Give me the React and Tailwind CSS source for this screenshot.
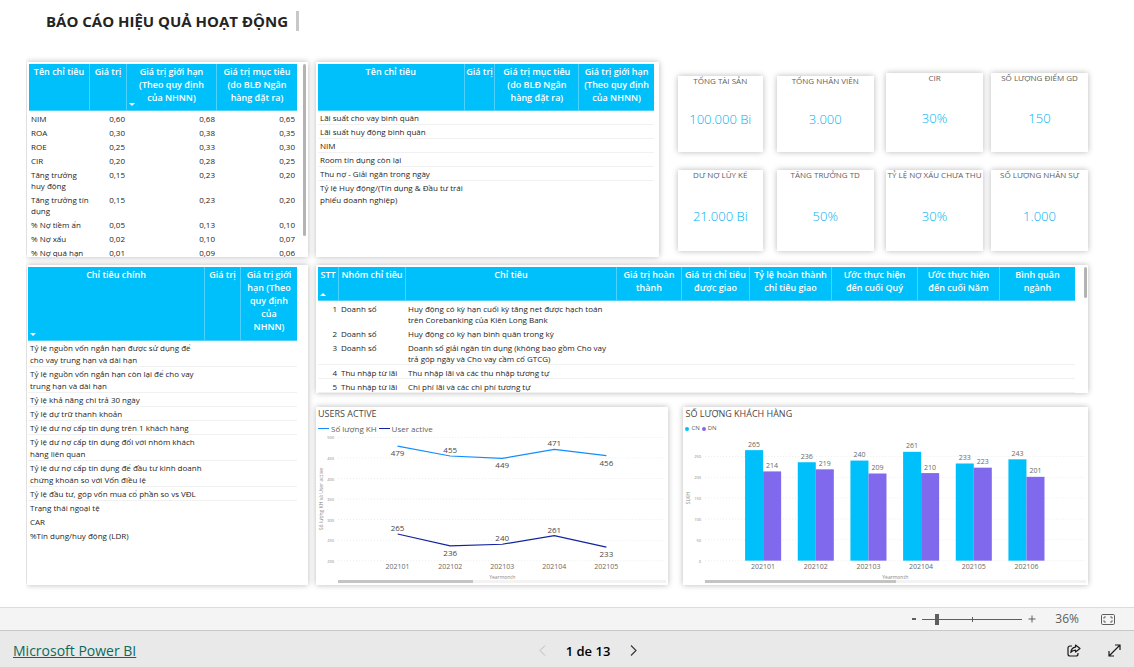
const INDICATORS = [
  ['NIM', '0,60', '0,68', '0,65'],
  ['ROA', '0,30', '0,38', '0,35'],
  ['ROE', '0,25', '0,33', '0,30'],
  ['CIR', '0,20', '0,28', '0,25'],
  ['Tăng trưởng huy động', '0,15', '0,23', '0,20'],
  ['Tăng trưởng tín dụng', '0,15', '0,23', '0,20'],
  ['% Nợ tiềm ẩn', '0,05', '0,13', '0,10'],
  ['% Nợ xấu', '0,02', '0,10', '0,07'],
  ['% Nợ quá hạn', '0,01', '0,09', '0,06'],
];

const RATES = [
  'Lãi suất cho vay bình quân',
  'Lãi suất huy động bình quân',
  'NIM',
  'Room tín dụng còn lại',
  'Thu nợ - Giải ngân trong ngày',
  'Tỷ lệ Huy động/(Tín dụng & Đầu tư trái phiếu doanh nghiệp)',
];

const MAIN_TARGETS = [
  'Tỷ lệ nguồn vốn ngắn hạn được sử dụng để cho vay trung hạn và dài hạn',
  'Tỷ lệ nguồn vốn ngắn hạn còn lại để cho vay trung hạn và dài hạn',
  'Tỷ lệ khả năng chi trả 30 ngày',
  'Tỷ lệ dự trữ thanh khoản',
  'Tỷ lệ dư nợ cấp tín dụng trên 1 khách hàng',
  'Tỷ lệ dư nợ cấp tín dụng đối với nhóm khách hàng liên quan',
  'Tỷ lệ dư nợ cấp tín dụng để đầu tư kinh doanh chứng khoán so với Vốn điều lệ',
  'Tỷ lệ đầu tư, góp vốn mua cổ phần so vs VĐL',
  'Trạng thái ngoại tệ',
  'CAR',
  '%Tín dụng/huy động (LDR)',
];

const PLAN = [
  [1, 'Doanh số', 'Huy động có kỳ hạn cuối kỳ tăng net được hạch toán trên Corebanking của Kiên Long Bank'],
  [2, 'Doanh số', 'Huy động có kỳ hạn bình quân trong kỳ'],
  [3, 'Doanh số', 'Doanh số giải ngân tín dụng (không bao gồm Cho vay trả góp ngày và Cho vay cầm cố GTCG)'],
  [4, 'Thu nhập từ lãi', 'Thu nhập lãi và các thu nhập tương tự'],
  [5, 'Thu nhập từ lãi', 'Chi phí lãi và các chi phí tương tự'],
];

const CUSTOMERS = [
  ['202101', 265, 214],
  ['202102', 236, 219],
  ['202103', 240, 209],
  ['202104', 261, 210],
  ['202105', 233, 223],
  ['202106', 243, 201],
];

function Panel({ className = '', children }) {
  return (
    <section className={`overflow-hidden bg-white shadow-[0_0_6px_rgba(0,0,0,0.28)] ${className}`}>
      {children}
    </section>
  );
}

function Th({ children, sort, pad = 'px-0.5' }) {
  return (
    <th
      scope="col"
      className={`relative border-r border-b border-[#4dd2ff] bg-[#00c0fb] pt-px align-top text-[9px] leading-[13px] font-semibold text-white last:border-r-0 ${pad}`}
    >
      {children}
      {sort && (
        <svg viewBox="0 0 6 3" className="absolute bottom-1 left-0.5 h-[3px] w-[6px] fill-white">
          {sort === 'down' ? <path d="M0 0h6L3 3z" /> : <path d="M0 3h6L3 0z" />}
        </svg>
      )}
    </th>
  );
}

function Td({ children, line, right, tight, pad = 'pl-0.5' }) {
  return (
    <td
      className={`border-b align-top text-[8px] text-[#252423] ${tight ? 'pt-0.5 leading-[11px]' : 'pt-px leading-3'} ${line ? 'border-[#f1f1f1]' : 'border-transparent'} ${right ? 'pr-0.5 text-right' : pad}`}
    >
      {children}
    </td>
  );
}

function Cols({ widths }) {
  const total = widths.reduce((a, b) => a + b, 0);
  return (
    <colgroup>
      {widths.map((w, i) => (
        <col key={i} style={{ width: `${(w / total) * 100}%` }} />
      ))}
    </colgroup>
  );
}

const TABLE = 'w-full table-fixed border-separate border-spacing-0';

function Kpi({ title, value, className }) {
  return (
    <section className={`flex flex-col bg-white text-center shadow-[0_0_6px_rgba(0,0,0,0.28)] ${className}`}>
      <h2 className="flex justify-center text-[8px] leading-[10px] whitespace-nowrap text-[#605e5c]">{title}</h2>
      <p className="flex flex-1 items-center justify-center pt-0.5 text-[13px] font-light text-[#00b0f0]">{value}</p>
    </section>
  );
}

function LineChart() {
  const xs = [397.5, 450, 502, 554, 606];
  const y = (v) => 560.5 - (v - 200) * 0.41;
  const total = [479, 455, 449, 471, 456];
  const active = [265, 236, 240, 261, 233];
  const below = { 479: 1, 449: 1, 456: 1, 236: 1, 233: 1 };
  const path = (vals) => vals.map((v, i) => `${xs[i]},${y(v)}`).join(' ');
  return (
    <svg viewBox="316 433 352 147" className="block w-full" role="img" aria-label="Users active">
      {[500, 450, 400, 350, 300, 250, 200].map((v) => (
        <g key={v}>
          <line x1="338" x2="665" y1={y(v)} y2={y(v)} stroke="#ececec" strokeDasharray="1 2" />
          <text x="334" y={y(v) + 2} textAnchor="end" fontSize="4" fill="#8a8886">{v}</text>
        </g>
      ))}
      <polyline points={path(total)} fill="none" stroke="#118dff" strokeWidth="1.2" />
      <polyline points={path(active)} fill="none" stroke="#12239e" strokeWidth="1.2" />
      {[...total, ...active].map((v, i) => (
        <text key={i} x={xs[i % 5]} y={y(v) + (below[v] ? 10 : -3)} textAnchor="middle" fontSize="8" fill="#4a4846">{v}</text>
      ))}
      {xs.map((x, i) => (
        <text key={x} x={x} y="569" textAnchor="middle" fontSize="7" fill="#6b6967">{`20210${i + 1}`}</text>
      ))}
      <text x="502" y="579" textAnchor="middle" fontSize="5" fill="#8a8886">Yearmonth</text>
      <text transform="translate(323 499) rotate(-90)" textAnchor="middle" fontSize="5" fill="#8a8886">Số lượng KH và User active</text>
    </svg>
  );
}

function BarChart() {
  const k = 0.4165;
  return (
    <svg viewBox="683 433 404 147" className="block w-full" role="img" aria-label="Số lượng khách hàng">
      {[250, 200, 150, 100, 50, 0].map((v) => (
        <g key={v}>
          <line x1="705" x2="1084" y1={560.5 - v * k} y2={560.5 - v * k} stroke="#ececec" strokeDasharray="1 2" />
          <text x="701" y={562.5 - v * k} textAnchor="end" fontSize="4" fill="#8a8886">{v}</text>
        </g>
      ))}
      {CUSTOMERS.map(([m, a, b], i) => {
        const x = 745 + i * 52.6;
        return (
          <g key={m} textAnchor="middle" fill="#6b6967">
            <rect x={x} y={560.5 - a * k} width="18" height={a * k} fill="#00c0fb" />
            <rect x={x + 18} y={560.5 - b * k} width="18" height={b * k} fill="#8069ed" />
            <text x={x + 9} y={557 - a * k} fontSize="7">{a}</text>
            <text x={x + 27} y={557 - b * k} fontSize="7">{b}</text>
            <text x={x + 18} y="569" fontSize="7">{m}</text>
          </g>
        );
      })}
      <text x="895" y="579" textAnchor="middle" fontSize="5" fill="#8a8886">Yearmonth</text>
      <text transform="translate(690 498) rotate(-90)" textAnchor="middle" fontSize="5" fill="#8a8886">SLKH</text>
    </svg>
  );
}

function HScroll({ className }) {
  return (
    <div className="mr-0.5 ml-[22px] h-[3px] bg-[#f3f3f3]">
      <div className={`h-full bg-[#c4c4c4] ${className}`} />
    </div>
  );
}

export default function App() {
  return (
    <div className="flex min-h-screen flex-col bg-white font-['Open_Sans','Noto_Sans',sans-serif] text-[#252423]">
      <header className="flex h-[54px] items-start pt-[11px] pl-[46px]">
        <h1 className="text-[15px] leading-5 font-bold">BÁO CÁO HIỆU QUẢ HOẠT ĐỘNG</h1>
        <span className="ml-2 h-5 w-[3px] bg-[#c8c8c8]" />
      </header>

      <main className="ml-[26px] grid flex-1 grid-cols-[281fr_772fr] gap-2 overflow-hidden pt-2 pr-[46px] pb-[22px] pl-px">
        <div className="flex min-w-0 flex-col gap-2">
          <Panel className="flex h-[195px] gap-1.5 pt-0.5 pr-0.5 pl-0.5">
            <div className="min-w-0 flex-1">
              <table className={TABLE}>
                <Cols widths={[61, 37, 90, 80]} />
                <thead>
                  <tr className="h-[47px]">
                    <Th>Tên chỉ tiêu</Th>
                    <Th>Giá trị</Th>
                    <Th sort="down" pad="px-2">Giá trị giới hạn (Theo quy định của NHNN)</Th>
                    <Th>Giá trị mục tiêu (do BLĐ Ngân hàng đặt ra)</Th>
                  </tr>
                </thead>
                <tbody>
                  {INDICATORS.map((r) => (
                    <tr key={r[0]}>
                      <Td tight>{r[0]}</Td>
                      <Td tight right>{r[1]}</Td>
                      <Td tight right>{r[2]}</Td>
                      <Td tight right>{r[3]}</Td>
                    </tr>
                  ))}
                </tbody>
              </table>
            </div>
            <div className="h-[172px] w-[3px] rounded-full bg-[#b3b3b3]" />
          </Panel>

          <Panel className="h-[320px] pt-0.5 pr-[11px] pl-px">
            <table className={TABLE}>
              <Cols widths={[177, 36, 56]} />
              <thead>
                <tr className="h-[74px]">
                  <Th sort="down">Chỉ tiêu chính</Th>
                  <Th>Giá trị</Th>
                  <Th pad="px-1">Giá trị giới hạn (Theo quy định của NHNN)</Th>
                </tr>
              </thead>
              <tbody>
                {MAIN_TARGETS.map((t, i) => (
                  <tr key={t}>
                    <Td line={i < 8} pad="px-0.5">{t}</Td>
                    <Td line={i < 8} />
                    <Td line={i < 8} />
                  </tr>
                ))}
              </tbody>
            </table>
          </Panel>
        </div>

        <div className="flex min-w-0 flex-col">
          <div className="grid grid-cols-[343fr_429fr]">
            <Panel className="h-[195px] min-w-0 pt-0.5 pr-[5px] pl-0.5">
              <table className={TABLE}>
                <Cols widths={[147, 31, 84, 75]} />
                <thead>
                  <tr className="h-[47px]">
                    <Th>Tên chỉ tiêu</Th>
                    <Th pad="px-0">Giá trị</Th>
                    <Th>Giá trị mục tiêu (do BLĐ Ngân hàng đặt ra)</Th>
                    <Th pad="px-0">Giá trị giới hạn (Theo quy định của NHNN)</Th>
                  </tr>
                </thead>
                <tbody>
                  {RATES.map((t, i) => (
                    <tr key={t}>
                      <Td line={i < 5}>{t}</Td>
                      <Td line={i < 5} />
                      <Td line={i < 5} />
                      <Td line={i < 5} />
                    </tr>
                  ))}
                </tbody>
              </table>
            </Panel>
            <div className="grid min-w-0 grid-cols-[197fr_203fr] gap-3 pl-[19px]">
              <div className="grid grid-cols-[85fr_98fr] content-start gap-x-3.5 gap-y-[18px] pt-3.5">
                <Kpi title="TỔNG TÀI SẢN" value="100.000 Bi" className="h-[76px]" />
                <Kpi title="TỔNG NHÂN VIÊN" value="3.000" className="h-[76px]" />
                <Kpi title="DƯ NỢ LŨY KẾ" value="21.000 Bi" className="h-[81px]" />
                <Kpi title="TĂNG TRƯỞNG TD" value="50%" className="h-[81px]" />
              </div>
              <div className="grid grid-cols-2 content-start gap-x-2 gap-y-[18px] pt-[11px]">
                <Kpi title="CIR" value="30%" className="h-[79px]" />
                <Kpi title="SỐ LƯỢNG ĐIỂM GD" value="150" className="h-[79px]" />
                <Kpi title="TỶ LỆ NỢ XẤU CHƯA THU" value="30%" className="h-[81px]" />
                <Kpi title="SỐ LƯỢNG NHÂN SỰ" value="1.000" className="h-[81px]" />
              </div>
            </div>
          </div>

          <Panel className="mt-2 flex h-[128px] gap-[9px] pt-0.5 pl-0.5">
            <div className="min-w-0 flex-1">
              <table className={TABLE}>
                <Cols widths={[21, 67, 211, 65, 68, 82, 86, 82, 75]} />
                <thead>
                  <tr className="h-[34px]">
                    <Th sort="up">STT</Th>
                    <Th pad="px-0">Nhóm chỉ tiêu</Th>
                    <Th>Chỉ tiêu</Th>
                    <Th>Giá trị hoàn thành</Th>
                    <Th pad="px-0">Giá trị chỉ tiêu được giao</Th>
                    <Th pad="px-0">Tỷ lệ hoàn thành chỉ tiêu giao</Th>
                    <Th pad="px-2">Ước thực hiện đến cuối Quý</Th>
                    <Th pad="px-2">Ước thực hiện đến cuối Năm</Th>
                    <Th>Bình quân ngành</Th>
                  </tr>
                </thead>
                <tbody>
                  {PLAN.map(([n, group, target], i) => (
                    <tr key={n}>
                      <Td tight line={i > 1} right>{n}</Td>
                      <Td tight line={i > 1}>{group}</Td>
                      <Td tight line={i > 1} pad="pr-2 pl-0.5">{target}</Td>
                      {[0, 1, 2, 3, 4, 5].map((c) => (
                        <Td tight key={c} line={i > 1} />
                      ))}
                    </tr>
                  ))}
                </tbody>
              </table>
            </div>
            <div className="mr-px h-[31px] w-[3px] rounded-full bg-[#b3b3b3]" />
          </Panel>

          <div className="mt-3.5 grid grid-cols-[352fr_404fr] gap-[15px]">
            <Panel className="min-w-0 pb-0.5">
              <h2 className="pl-0.5 text-[9px] leading-[13px] text-[#4a4846]">USERS ACTIVE</h2>
              <div className="flex h-[13px] items-center gap-0.5 pt-1 pl-0.5 text-[8px] leading-[13px] text-[#605e5c]">
                <i className="h-px w-[11px] bg-[#118dff]" />
                <span>Số lượng KH</span>
                <i className="h-px w-[11px] bg-[#12239e]" />
                <span>User active</span>
              </div>
              <LineChart />
              <HScroll className="w-[41%]" />
            </Panel>
            <Panel className="min-w-0 pb-0.5">
              <h2 className="pl-0.5 text-[9px] leading-[13px] text-[#4a4846]">SỐ LƯỢNG KHÁCH HÀNG</h2>
              <div className="flex h-[13px] items-center gap-0.5 pt-1 pl-0.5 text-[6px] leading-[13px] text-[#605e5c]">
                <i className="size-1 rounded-full bg-[#00c0fb]" />
                <span>CN</span>
                <i className="size-1 rounded-full bg-[#8069ed]" />
                <span>DN</span>
              </div>
              <BarChart />
              <HScroll className="w-1/2" />
            </Panel>
          </div>
        </div>
      </main>

      <div className="flex h-[23px] items-center justify-end border-t border-[#dcdcdc] bg-[#f4f4f4] pr-[19px] text-[#605e5c]">
        <button type="button" aria-label="Zoom out" className="flex h-4 w-3 items-center justify-center">
          <svg viewBox="0 0 4 2" className="h-0.5 w-1 fill-current"><path d="M0 0h4v2H0z" /></svg>
        </button>
        <input
          type="range"
          aria-label="Zoom"
          min="0"
          max="100"
          defaultValue="13"
          className="mr-[5px] ml-0.5 h-[11px] w-[100px] appearance-none bg-[linear-gradient(#605e5c,#605e5c),linear-gradient(#605e5c,#605e5c)] bg-[length:100%_1px,1px_5px] bg-center bg-no-repeat [&::-webkit-slider-thumb]:h-[11px] [&::-webkit-slider-thumb]:w-1 [&::-webkit-slider-thumb]:appearance-none [&::-webkit-slider-thumb]:bg-[#605e5c]"
        />
        <button type="button" aria-label="Zoom in" className="flex h-4 w-[10px] items-center justify-center">
          <svg viewBox="0 0 8 8" className="size-2 stroke-current"><path d="M4 0.5v7M0.5 4h7" /></svg>
        </button>
        <span className="ml-[18px] text-[12px] leading-4">36%</span>
        <button type="button" aria-label="Fit to page" className="ml-[22px]">
          <svg viewBox="0 0 14 11" className="h-[11px] w-[14px] fill-none stroke-current">
            <rect x="0.5" y="0.5" width="13" height="10" rx="1.2" />
            <path d="M4.8 3H3v1.7M3 6.3V8h1.8M9.2 3H11v1.7M11 6.3V8H9.2" />
          </svg>
        </button>
      </div>

      <footer className="grid h-[37px] grid-cols-[1fr_auto_1fr] items-center border-t border-[#c8c8c8] bg-[#e9e9e9] pt-[3px] pr-[13px] pl-[13px]">
        <a href="#powerbi" className="justify-self-start text-[14px] leading-5 text-[#0b6a5b] underline">Microsoft Power BI</a>
        <nav aria-label="Pages" className="flex items-center gap-5 pl-[42px]">
          <button type="button" aria-label="Previous page" disabled>
            <svg viewBox="0 0 7 11" className="h-[11px] w-[7px] fill-none stroke-[#b8b8b8]"><path d="M6 0.5L1 5.5l5 5" /></svg>
          </button>
          <span className="text-[13px] leading-5 font-semibold text-black">1 de 13</span>
          <button type="button" aria-label="Next page">
            <svg viewBox="0 0 7 11" className="h-[11px] w-[7px] fill-none stroke-[#3b3a39] stroke-[1.2]"><path d="M1 0.5l5 5-5 5" /></svg>
          </button>
        </nav>
        <div className="flex items-center gap-[27px] justify-self-end">
          <button type="button" aria-label="Share">
            <svg viewBox="0 0 14 13" className="h-[13px] w-[14px] fill-none stroke-[#1b1a19] stroke-[1.2]" strokeLinejoin="round">
              <path d="M5 2H3a2 2 0 0 0-2 2v6a2 2 0 0 0 2 2h6a2 2 0 0 0 2-2V9" />
              <path d="M8.5 1L13 4.5 8.5 8V6.2C6.500 6.200 5 6.800 3.800 8.500c.3-3 1.900-5.100 4.700-5.400z" />
            </svg>
          </button>
          <button type="button" aria-label="Full screen">
            <svg viewBox="0 0 13 13" className="size-[13px] fill-none stroke-[#1b1a19] stroke-[1.2]">
              <path d="M1 12L12 1M7 1h5v5M1 7v5h5" />
            </svg>
          </button>
        </div>
      </footer>
    </div>
  );
}
